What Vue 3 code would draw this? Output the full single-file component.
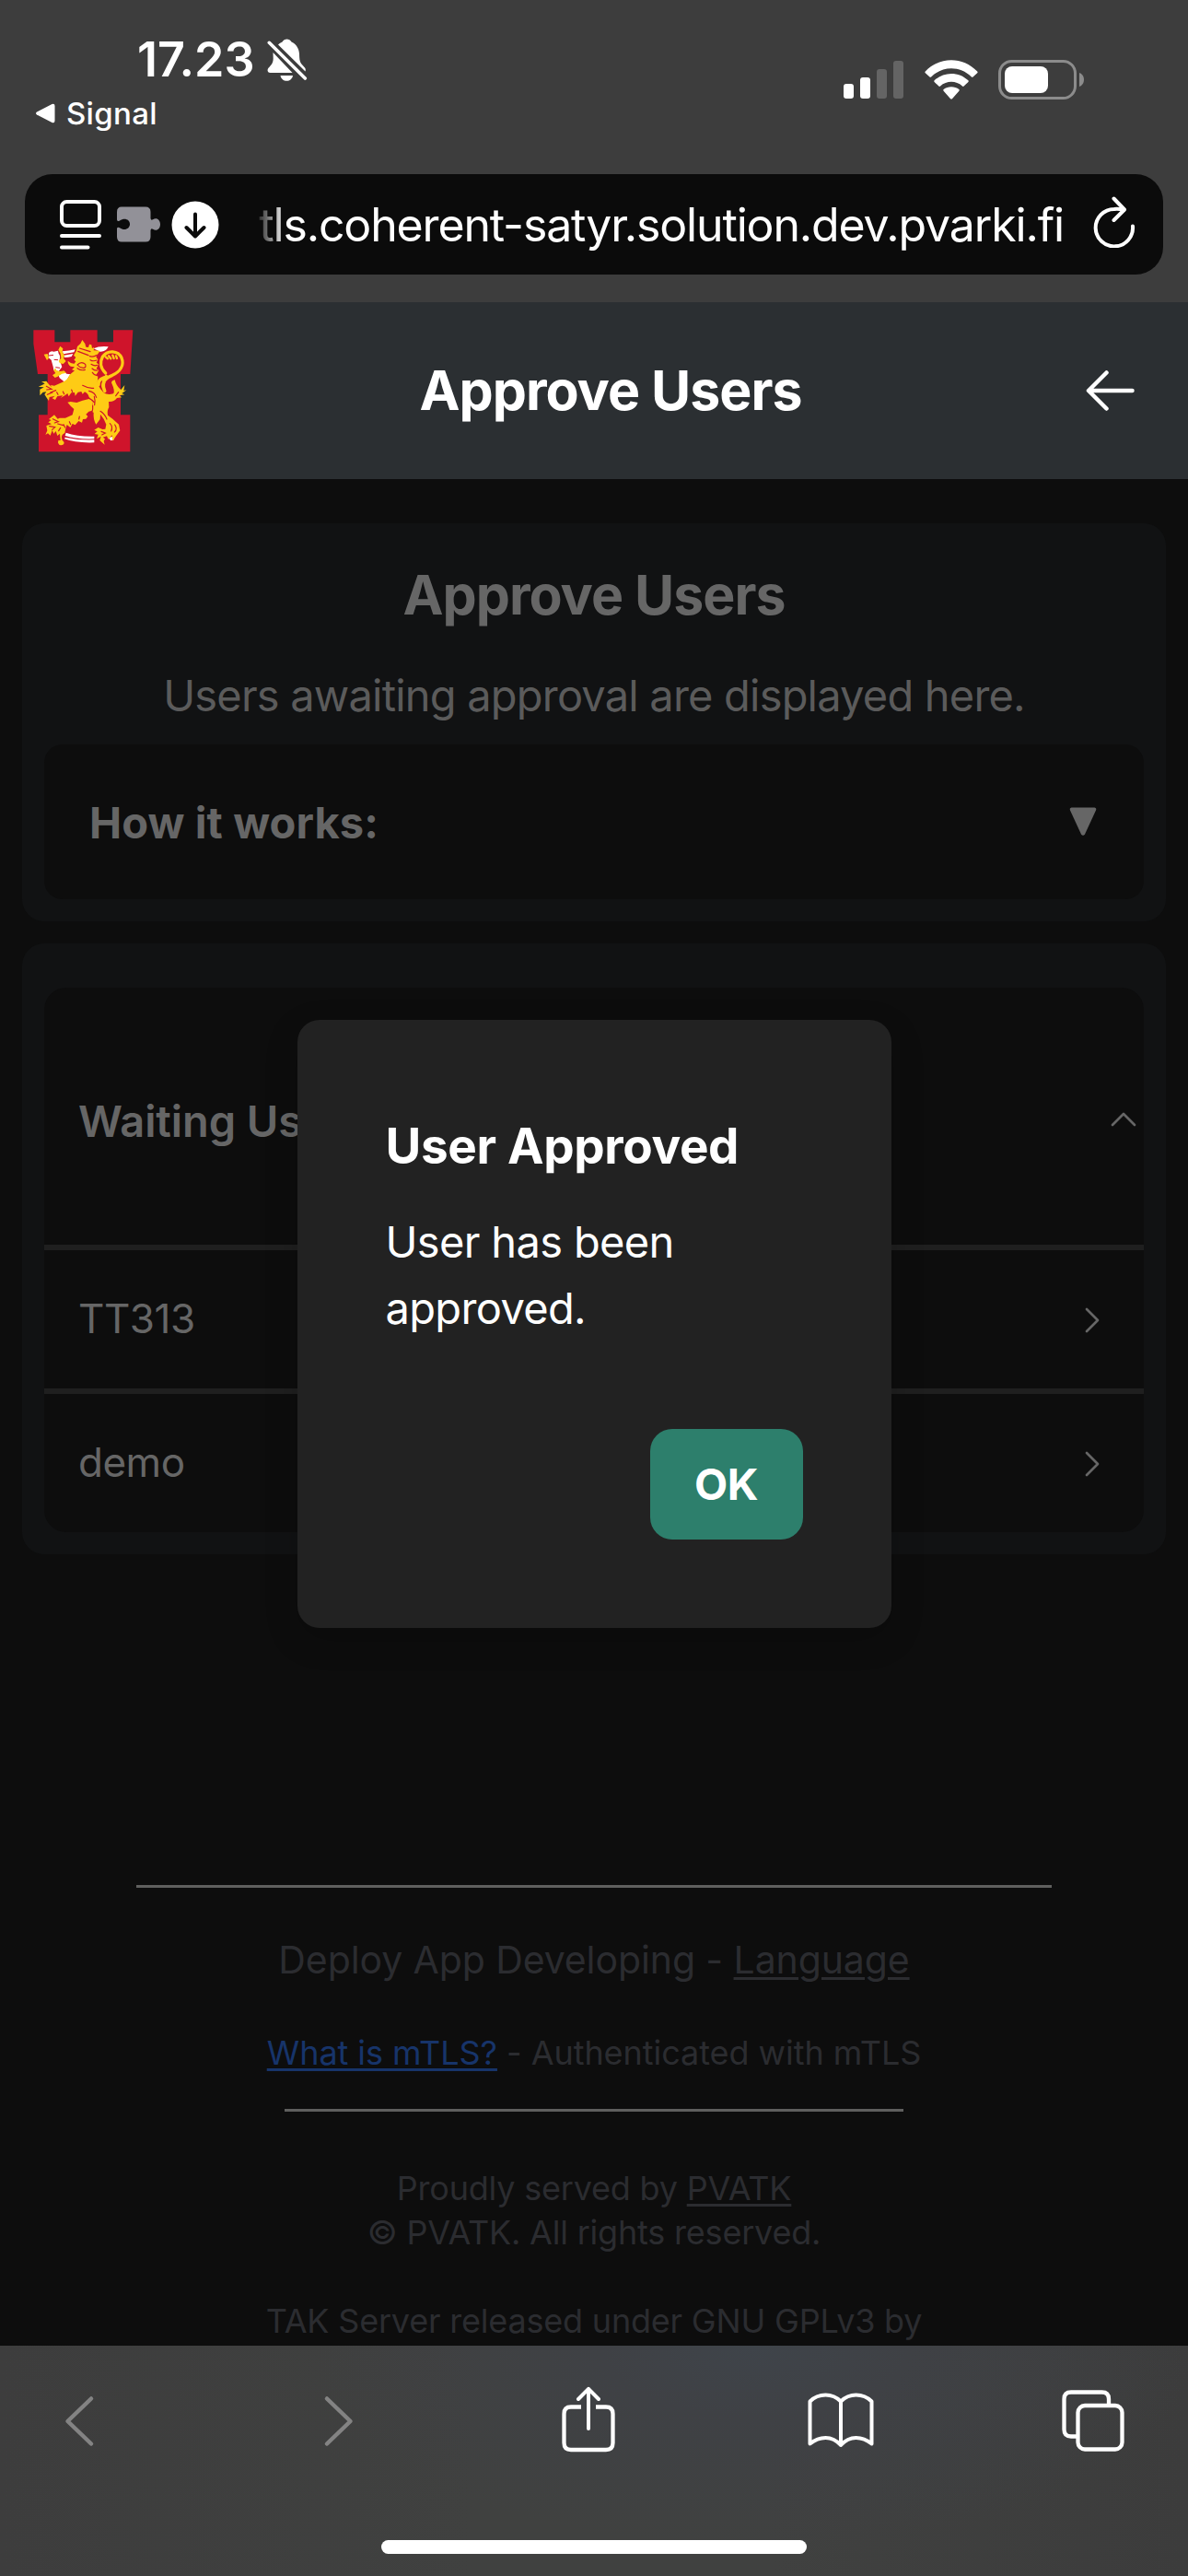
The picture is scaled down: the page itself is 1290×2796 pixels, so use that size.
<script setup>
import { ref } from 'vue'

const users = ref(['TT313', 'demo'])
const bars = [
  { h: 16, on: true },
  { h: 23, on: true },
  { h: 32, on: false },
  { h: 41, on: false },
]
</script>

<template>
  <div class="screen">
    <header class="chrome">
      <div class="status">
        <div class="status-left">
          <div class="clock">
            <span class="time">17.23</span>
            <svg width="44" height="46" viewBox="0 0 44 46">
              <path d="M12 6.500C14 4.500 15.500 4 16.500 3.500C17.500 1.500 19.500 .5 21.500 .5C23.500 .5 25.500 1.500 26.500 3.500C32 6 34.800 11 35 16.500C35.100 21.500 35.300 24.500 37 27L41 31.500C42 33 42 34 41.500 35.500Z" fill="#fff" />
              <path d="M6.500 15L27.500 37H3.500C.5 37-.3 34 1.500 31.800C4.500 28.500 6.500 27 6.700 21.500Z" fill="#fff" />
              <path d="M14.500 40H28C27.500 43.500 24.500 45.800 21.300 45.800C18 45.800 15 43.500 14.500 40Z" fill="#fff" />
              <path d="M2 4L41.500 43" stroke="#3d3d3d" stroke-width="7.500" />
              <path d="M2.300 4.300L41.300 43" stroke="#fff" stroke-width="3.600" stroke-linecap="round" />
            </svg>
          </div>
          <div class="return">
            <svg width="22" height="22" viewBox="0 0 22 22"><path d="M2 9.500L18.500.9Q21.500 0 21.500 3V19Q21.500 22 18.500 21L2 12.500Q0 11 2 9.500Z" fill="#fff" /></svg>
            <span>Signal</span>
          </div>
        </div>
        <div class="status-right">
          <div class="bars">
            <i v-for="(b, i) in bars" :key="i" :class="{ on: b.on }" :style="{ height: b.h + 'px' }"></i>
          </div>
          <svg class="wifi" width="58" height="43" viewBox="0 0 58 43" fill="#fff">
            <path d="M.8 12.500C16.500-3.900 41.500-3.900 57.200 12.500Q58 13.400 57.200 14.200L52.500 18.600Q51.700 19.200 50.900 18.400C38.500 6.200 19.500 6.200 7.100 18.400Q6.300 19.200 5.500 18.600L.8 14.200Q0 13.400 .8 12.500Z" />
            <path d="M10.600 22.300C20.900 12.500 37.100 12.500 47.400 22.300Q48.100 23.100 47.400 23.900L42.600 28.600Q41.800 29.300 41 28.500C34 22.300 24 22.300 17 28.500Q16.200 29.300 15.400 28.600L10.600 23.900Q9.900 23.100 10.600 22.300Z" />
            <path d="M20.600 32C25.300 28.200 32.700 28.200 37.400 32Q38.200 32.900 37.400 33.700L29.900 42.200Q29 43 28.100 42.200L20.600 33.700Q19.800 32.900 20.600 32Z" />
          </svg>
          <svg width="94" height="43" viewBox="0 0 94 43">
            <rect x="1.500" y="1.500" width="82" height="40" rx="13" fill="none" stroke="#8c8c8c" stroke-width="3" />
            <rect x="7" y="7" width="47" height="29" rx="8" fill="#fff" />
            <path d="M88 14C91 15 93 18 93 21.500C93 25 91 28 88 29Z" fill="#8c8c8c" />
          </svg>
        </div>
      </div>
      <div class="urlbar">
        <svg width="46" height="56" viewBox="0 0 46 56" fill="none" stroke="#fff" stroke-width="4" stroke-linecap="round">
          <rect x="2" y="3" width="41" height="26" rx="5.500" />
          <path d="M2 40H43M2 52.500H30.500" />
        </svg>
        <svg class="puzzle" width="48" height="40" viewBox="0 0 48 40">
          <path d="M5 .5H31Q36.500 .5 36.500 6V13Q37 15.500 39 14.200C43 11.500 47 14.500 47 19.500C47 24.500 43 27.500 39 24.800Q37 23.500 36.500 26V33Q36.500 38.500 31 38.500H5Q0 38.500 0 33V24Q.5 22 3 23.300C8 27 14 24.500 14 19.300C14 14 8 12 3 15.500Q.5 17 0 14.500V6Q0 .5 5 .5Z" fill="#929198" />
        </svg>
        <svg class="download" width="52" height="52" viewBox="0 0 52 52">
          <circle cx="26" cy="26" r="25.500" fill="#fff" />
          <path d="M26 14.500V37M16.500 29L26 38.500L35.500 29" fill="none" stroke="#0b0b0b" stroke-width="4" stroke-linecap="round" stroke-linejoin="round" />
        </svg>
        <div class="url"><span>tls.coherent-satyr.solution.dev.pvarki.fi</span></div>
        <svg class="reload" width="46" height="56" viewBox="0 0 46 56" fill="none" stroke="#fff" stroke-width="4" stroke-linecap="round" stroke-linejoin="round">
          <path d="M43 32.500A20.200 20.200 0 1 1 22.800 14Q28 13.300 33 15" />
          <path d="M22.500 2.500L34 14.500L22.500 26" />
        </svg>
      </div>
    </header>

    <nav class="appbar">
      <svg class="logo" width="109" height="133" viewBox="107 83 327 399">
        <path fill="#cf142b" d="M108 84H177V123H228V84H316V123H368V84H432L423 227H392V360H423V480H125V360H154V227H122L108 128Z" />
        <g fill="#fff">
          <path d="M202 153Q225 151 244 147L240 156Q222 159 206 162ZM207 166L237 161L232 170Q222 173 209 173ZM304 144Q322 135 352 138Q344 155 325 154Z" />
          <path d="M158 158Q165 151 174 154L188 151L190 160Q197 168 193 180L201 204L190 218L174 214L172 203L166 181L157 174ZM190 231L207 219L216 226L229 228L221 238L217 250L207 251L193 240Z" />
          <path d="M214 418Q250 431 306 430V438Q250 440 211 428ZM211 433Q255 443 306 441V450Q244 452 209 438ZM352 434L366 431L371 440L360 444Z" />
        </g>
        <path d="M175 180L188 181M180 205L194 207M158 167L173 165" stroke="#cf142b" stroke-width="3" />
        <g fill="#fecb15">
          <path d="M142 163L154 161L158 175L152 182ZM195 136L204 144L202 154L209 167L206 176L214 185L205 194L194 192L190 184L198 175L196 160L189 148Z" />
          <path d="M179 207L183 215Q195 221 207 216L215 223L201 226L187 235L178 239L170 231L180 224L174 216Z" />
          <path d="M267 116L261 128L251 137L247 153L239 166L246 173L240 181L246 186L241 193Q231 194 220 184Q219 195 229 202L242 204L233 213L242 216L226 229Q218 247 203 253L176 265L164 263L167 270L157 259L150 250L134 252L145 258L136 263L124 268L142 270L129 277V297L139 286L150 285L144 293L151 304L158 314L160 302L178 298L169 306L179 311L186 299L204 297L196 305L210 297L219 290L223 300L231 288L242 287L244 298L253 286L264 284L268 292L275 285Q286 290 289 302Q302 315 301 329L299 350L304 352Q302 374 312 391L325 374L326 358Q337 370 345 391L342 406L333 407L319 401L306 409L316 414L307 422L319 424L314 438L328 430L324 443L340 457L337 446L341 438L334 433L347 429L352 440L364 426L366 445L377 429L390 411L386 391L366 373L350 361Q347 346 354 335L353 317Q371 318 380 305L396 303L387 297L405 294L396 290L411 279L402 281L405 263L393 278Q377 266 373 246Q363 248 362 255Q375 284 368 291Q349 297 336 287Q325 276 316 257L318 235L312 230L321 215L313 210L320 195L313 190L318 180L312 171L316 164L325 151L304 150L306 140L299 143L297 132L290 130L287 140L279 139L276 128Z" />
          <path d="M219 319L229 317L249 320L268 313L289 308Q304 312 300 330L299 346L288 349L279 358L285 365L279 373L269 374L266 385L255 380L244 393L235 389L228 401L217 392L213 404L210 419Q195 425 202 443Q211 448 206 456Q194 464 188 451L189 443L196 443L194 421L186 428L181 413L174 421L169 410L163 427L155 420L147 425L153 411L150 395L167 390L156 384L166 377L158 374L176 360L187 373L193 370L212 370L235 360L240 341L230 332Z" />
        </g>
        <g fill="none" stroke="#fecb15" stroke-linecap="round">
          <path d="M343 224C325 207 324 187 333 171C350 147 384 151 395 174C405 199 390 219 365 231C343 239 333 252 335 268" stroke-width="10" />
          <path d="M338 239Q317 247 320 261M345 235Q329 263 340 282" stroke-width="11" />
          <path d="M343 171L350 177M353 168L360 177M366 166L370 176M377 168L380 176" stroke-width="7" />
        </g>
        <g fill="none" stroke="#cf142b" stroke-width="3.500" stroke-linecap="round">
          <path d="M258 143L293 154M253 153L287 166M251 197Q264 184 277 195Q281 207 270 207Q258 206 251 197M251 208Q263 217 276 213" />
          <path d="M315 165Q303 173 291 169M314 182Q302 187 293 181M316 198Q306 202 296 195M317 215Q306 216 299 209M315 232Q305 230 300 222" />
          <path d="M268 264Q288 275 304 273M289 282Q308 286 313 303M287 304Q298 309 308 321M306 300Q310 313 307 328M301 330Q302 342 299 350" />
          <path d="M150 267L167 276L151 278M163 287L181 280M153 294L170 287M188 294L184 286M208 292L204 284M235 286L232 278M326 348Q341 358 347 374M357 388Q368 398 361 413M373 392Q383 406 372 416M329 414L342 419L331 425" />
          <path d="M171 373L189 382L177 386M160 397L178 400L169 408M187 389L205 394M196 402L190 412M211 401L206 391M229 391L225 382M256 374L258 365M345 252L352 279M385 286L376 298" />
        </g>
      </svg>
      <h1>Approve Users</h1>
      <svg class="back" width="54" height="46" viewBox="0 0 54 46" fill="none" stroke="#fff" stroke-width="4.500" stroke-linecap="round" stroke-linejoin="round"><path d="M50.500 23H3.500M22.500 3.500L3 23L22.500 42.500" /></svg>
    </nav>

    <main class="page">
      <section class="card intro">
        <h2>Approve Users</h2>
        <p>Users awaiting approval are displayed here.</p>
        <div class="how">
          <span>How it works:</span>
          <svg width="30" height="32" viewBox="0 0 30 32"><path d="M2.500 .5H27.500Q30 1 29 3.500L17 29.500Q15 32 13 29.500L1 3.500Q0 1 2.500 .5Z" fill="#666" /></svg>
        </div>
      </section>

      <section class="card waiting">
        <div class="list">
          <div class="list-head">
            <span>Waiting Users</span>
            <svg width="28" height="16" viewBox="0 0 28 16" fill="none" stroke="#666" stroke-width="2.700" stroke-linecap="round" stroke-linejoin="round"><path d="M2 14L14 2L26 14" /></svg>
          </div>
          <div v-for="u in users" :key="u" class="row">
            <span>{{ u }}</span>
            <svg width="16" height="28" viewBox="0 0 16 28" fill="none" stroke="#666" stroke-width="2.700" stroke-linecap="round" stroke-linejoin="round"><path d="M2 2L14 14L2 26" /></svg>
          </div>
        </div>
      </section>

      <footer>
        <hr class="wide">
        <p class="deploy">Deploy App Developing - <a>Language</a></p>
        <p class="mtls"><a class="blue">What is mTLS?</a> - Authenticated with mTLS</p>
        <hr class="narrow">
        <p class="small served">Proudly served by <a>PVATK</a></p>
        <p class="small rights">© PVATK. All rights reserved.</p>
        <p class="small tak">TAK Server released under GNU GPLv3 by</p>
      </footer>

      <div class="modal" role="dialog">
        <h3>User Approved</h3>
        <p>User has been<br>approved.</p>
        <button>OK</button>
      </div>
    </main>

    <div class="toolbar">
      <div class="tools">
        <svg width="34" height="56" viewBox="0 0 34 56" fill="none" stroke="#838383" stroke-width="4.500" stroke-linecap="round" stroke-linejoin="round"><path d="M30 3.500L4.500 28L30 52.500" /></svg>
        <svg class="forward" width="34" height="56" viewBox="0 0 34 56" fill="none" stroke="#838383" stroke-width="4.500" stroke-linecap="round" stroke-linejoin="round"><path d="M4 3.500L29.500 28L4 52.500" /></svg>
        <svg class="share" width="58" height="72" viewBox="0 0 58 72" fill="none" stroke="#fff" stroke-width="4.300" stroke-linejoin="round">
          <path d="M21 22.500H10Q2.500 22.500 2.500 30V61.500Q2.500 69 10 69H48Q55.500 69 55.500 61.500V30Q55.500 22.500 48 22.500H37" />
          <path d="M29 46V3M18 14L29 2.800L40 14" stroke-linecap="round" stroke-width="4" />
        </svg>
        <svg class="book" width="72" height="60" viewBox="0 0 72 60" fill="none" stroke="#fff" stroke-width="4" stroke-linejoin="round" stroke-linecap="round">
          <path d="M36 9.500C31 4.500 25.500 2.500 19.500 2.500C13 2.500 7 5 2.500 9.500V55.500C8 51 13.500 49 19.500 49C25.500 49 31 51.500 36 57C41 51.500 46.500 49 52.500 49C58.500 49 64 51 69.500 55.500V9.500C65 5 59 2.500 52.500 2.500C46.500 2.500 41 4.500 36 9.500ZM36 9.500V57" />
        </svg>
        <svg class="tabs" width="68" height="68" viewBox="0 0 68 68" fill="none" stroke="#fff" stroke-width="4.300">
          <path d="M16.500 50.500H10Q2.500 50.500 2.500 43V10Q2.500 2.500 10 2.500H43.500Q51 2.500 51 10V16" />
          <rect x="17.500" y="17" width="48" height="47.500" rx="7.500" />
        </svg>
      </div>
      <div class="home"></div>
    </div>
  </div>
</template>

<style>
body { margin: 0; background: #0d0d0d; }
</style>

<style scoped>
* { box-sizing: border-box; }
.screen {
  width: 1290px; height: 2796px; overflow: hidden;
  display: flex; flex-direction: column;
  font-family: Inter, "Liberation Sans", sans-serif; color: #fff; background: #0d0d0d;
}
h1, h2, h3, p { margin: 0; white-space: nowrap; }
svg { flex: none; display: block; }
a { text-decoration: underline; text-decoration-thickness: 3px; text-underline-offset: 4px; }

.chrome { height: 328px; background: #3d3d3d; flex: none; padding: 0 27px; }
.status { height: 189px; display: flex; justify-content: space-between; }
.status-left { padding: 35px 0 0 11px; }
.clock { display: flex; align-items: center; gap: 13px; height: 60px; margin-left: 111px; }
.time { font-size: 52px; font-weight: 600; letter-spacing: 0; line-height: 60px; }
.return { display: flex; align-items: center; gap: 12px; margin-top: 8px; font-size: 33px; line-height: 40px; font-weight: 500; letter-spacing: .3px; }
.status-right { display: flex; align-items: flex-start; padding: 65px 85px 0 0; }
.bars { display: flex; align-items: flex-end; gap: 7px; height: 42px; margin-right: 23px; }
.bars i { width: 11px; border-radius: 3px; background: #646464; }
.bars i.on { background: #fff; }
.wifi { margin-right: 22px; }

.urlbar { height: 109px; border-radius: 30px; background: #0b0b0b; display: flex; align-items: center; padding: 0 30px 0 38px; }
.puzzle { margin-left: 16px; }
.download { margin-left: 11px; }
.url { flex: 1; display: flex; justify-content: flex-end; margin-left: 38px; padding-right: 3px; font-size: 50px; line-height: 70px; letter-spacing: -1.150px; white-space: nowrap; mask-image: linear-gradient(90deg, transparent, #000 34px); }
.reload { margin-left: 29px; margin-top: -6px; }

.appbar { height: 192px; flex: none; background: #2b2f32; display: flex; align-items: center; justify-content: space-between; padding: 0 57px 0 36px; }
.appbar h1 { font-size: 59px; font-weight: 700; letter-spacing: -1px; line-height: 72px; margin-left: 2px; }

.page { position: relative; flex: 1; min-height: 0; overflow: hidden; padding: 48px 24px 0; background: #0d0d0d; color: #666; }
.card { background: #111213; border-radius: 24px; padding: 0 24px; }
.intro { height: 432px; padding-top: 42px; text-align: center; }
.intro h2 { font-size: 59px; line-height: 72px; font-weight: 700; letter-spacing: -1px; }
.intro p { font-size: 47px; line-height: 72px; margin-top: 37px; color: #5b5b5b; letter-spacing: -.8px; }
.how { height: 168px; margin-top: 17px; border-radius: 20px; background: #0d0d0d; display: flex; align-items: center; justify-content: space-between; padding: 0 51px 0 49px; font-size: 47px; font-weight: 700; letter-spacing: .1px; }
.waiting { height: 663px; margin-top: 24px; padding-top: 48px; }
.list { border-radius: 24px; background: #0d0d0d; overflow: hidden; }
.list-head { height: 279px; display: flex; align-items: center; justify-content: space-between; padding: 10px 8px 0 37px; font-size: 47px; font-weight: 600; letter-spacing: -.1px; }
.list-head svg { margin-top: -4px; }
.row { height: 156px; border-top: 6px solid #1f1f1f; display: flex; align-items: center; justify-content: space-between; padding: 0 48px 0 37px; font-size: 44px; letter-spacing: -.5px; }
.row span { margin-top: -2px; }
.row svg { margin-top: 2px; }

footer { text-align: center; color: #2b2c30; }
hr { height: 3px; border: 0; margin: 0 auto; background: #5f5f5e; }
hr.wide { width: 994px; margin-top: 359px; }
.deploy { font-size: 41px; line-height: 60px; margin-top: 48px; letter-spacing: -.1px; }
.mtls { font-size: 36px; line-height: 54px; margin-top: 44px; letter-spacing: -.05px; }
.blue { color: #17346a; }
hr.narrow { width: 672px; margin-top: 34px; }
.small { font-size: 36px; line-height: 48px; letter-spacing: -.2px; }
.served { margin-top: 59px; }
.tak { margin-top: 48px; }

.modal {
  position: absolute; left: 322.500px; top: 587px; width: 645px; height: 660px; border-radius: 24px;
  background: #222; color: #fff; padding: 97px 96px; box-shadow: 0 12px 36px rgba(0, 0, 0, .18);
  display: flex; flex-direction: column;
}
.modal h3 { font-size: 53px; line-height: 80px; font-weight: 700; letter-spacing: -.35px; }
.modal p { font-size: 47px; line-height: 72px; margin-top: 28px; letter-spacing: -.65px; }
.modal button { align-self: flex-end; width: 166px; height: 120px; margin-top: 95px; border: 0; border-radius: 24px; background: #2d7f6c; color: #fff; font: 700 47px/120px Inter, "Liberation Sans", sans-serif; letter-spacing: -.5px; padding: 0; }

.toolbar { height: 250px; flex: none; background: radial-gradient(ellipse 480px 220px at 820px 0, #3f444a 0%, #3f4145 35%, transparent 100%), linear-gradient(90deg, #3d3d3d, #404140 40%, #404140 65%, #3c3c3c); }
.tools { height: 211px; display: flex; align-items: flex-start; padding: 54px 0 0 69px; }
.forward { margin-left: 248px; }
.share { margin: -10px 0 0 225px; }
.book { margin: -3px 0 0 209px; }
.tabs { margin: -6px 0 0 204px; }
.home { width: 462px; height: 15px; border-radius: 8px; background: #fff; margin: 0 auto; }
</style>
